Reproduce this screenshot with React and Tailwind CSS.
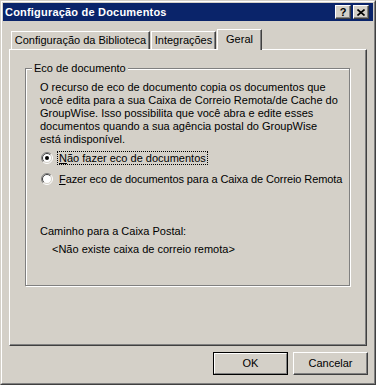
// App.jsx
import React from "react";

// Classic sunken radio button (12x12)
function Radio({ checked }) {
  return (
    <svg width="12" height="12" viewBox="0 0 12 12" className="shrink-0">
      <circle cx="6" cy="6" r="5" fill="#ffffff" />
      <path d="M2.1 9.9 A5.5 5.5 0 0 1 9.9 2.1" fill="none" stroke="#808080" strokeWidth="1" />
      <path d="M9.9 2.1 A5.5 5.5 0 0 1 2.1 9.9" fill="none" stroke="#ffffff" strokeWidth="1" />
      <path d="M2.8 9.2 A4.5 4.5 0 0 1 9.2 2.8" fill="none" stroke="#404040" strokeWidth="1" />
      <path d="M9.2 2.8 A4.5 4.5 0 0 1 2.8 9.2" fill="none" stroke="#d4d0c8" strokeWidth="1" />
      {checked && <circle cx="6" cy="6" r="2" fill="#000000" />}
    </svg>
  );
}

function TitleButton({ children }) {
  return (
    <div className="w-[16px] h-[14px] bg-[#d4d0c8] border border-t-white border-l-white border-r-[#404040] border-b-[#404040] shadow-[inset_-1px_-1px_0_#808080] flex items-center justify-center">
      {children}
    </div>
  );
}

export default function App() {
  return (
    <div className="w-[376px] h-[385px] bg-[#d4d0c8] border border-t-[#d4d0c8] border-l-[#d4d0c8] border-r-[#404040] border-b-[#404040] font-['Liberation_Sans',Arial,sans-serif] text-[11px] leading-[13px] text-black whitespace-nowrap">
      <div className="h-full border border-t-white border-l-white border-r-[#808080] border-b-[#808080] p-px flex flex-col">
        {/* Title bar */}
        <div className="h-[18px] bg-[#0a246a] flex items-center pl-[2px] pr-[4px]">
          <span className="flex-1 text-white font-bold text-[11px] tracking-[0.2px]">
            Configuração de Documentos
          </span>
          <div className="flex gap-[2px]">
            <TitleButton>
              <span className="font-bold text-[11px] leading-none text-black pt-px">?</span>
            </TitleButton>
            <TitleButton>
              <svg width="8" height="7" viewBox="0 0 8 7">
                <path d="M0.5 0.5 L7.5 6.5 M7.5 0.5 L0.5 6.5" stroke="#000" strokeWidth="1.6" />
              </svg>
            </TitleButton>
          </div>
        </div>

        {/* Body */}
        <div className="flex-1 flex flex-col px-[6px] pt-[8px]">
          {/* Tabs */}
          <div className="flex items-end gap-px pl-[2px]">
            <div className="w-[139px] h-[18px] border-t border-l border-r border-t-white border-l-white border-r-[#404040] shadow-[inset_-1px_0_0_#808080] flex items-center justify-center">
              Configuração da Biblioteca
            </div>
            <div className="w-[65px] h-[18px] border-t border-l border-r border-t-white border-l-white border-r-[#404040] shadow-[inset_-1px_0_0_#808080] flex items-center justify-center">
              Integrações
            </div>
            <div className="relative z-10 -mb-px w-[45px] h-[21px] bg-[#d4d0c8] border-t border-l border-r border-t-white border-l-white border-r-[#404040] shadow-[inset_-1px_0_0_#808080] flex items-start justify-center pt-[3px]">
              Geral
            </div>
          </div>

          {/* Tab panel */}
          <div className="h-[297px] border border-t-white border-l-white border-r-[#404040] border-b-[#404040] shadow-[inset_-1px_-1px_0_#808080] pl-[15px] pt-[18px]">
            <div className="relative w-[325px] h-[218px] border border-[#808080] shadow-[1px_1px_0_#ffffff,inset_1px_1px_0_#ffffff] pl-[14px] pt-[12px]">
              <span className="absolute -top-[7px] left-[6px] px-[2px] bg-[#d4d0c8]">
                Eco de documento
              </span>
              <p>
                O recurso de eco de documento copia os documentos que
                <br />
                você edita para a sua Caixa de Correio Remota/de Cache do
                <br />
                GroupWise. Isso possibilita que você abra e edite esses
                <br />
                documentos quando a sua agência postal do GroupWise
                <br />
                está indisponível.
              </p>

              <div className="mt-[5px] flex flex-col gap-[7px] pl-px">
                <div className="h-[14px] flex items-center gap-[4px]">
                  <Radio checked />
                  <span className="border border-dotted border-black px-px leading-[12px]">
                    <span className="underline">N</span>ão fazer eco de documentos
                  </span>
                </div>
                <div className="h-[14px] flex items-center gap-[4px]">
                  <Radio />
                  <span className="border border-transparent px-px leading-[12px] tracking-[-0.1px]">
                    <span className="underline">F</span>azer eco de documentos para a Caixa de Correio Remota
                  </span>
                </div>
              </div>

              <p className="mt-[39px]">Caminho para a Caixa Postal:</p>
              <p className="mt-[5px] pl-[12px]">&lt;Não existe caixa de correio remota&gt;</p>
            </div>
          </div>

          {/* Buttons */}
          <div className="flex justify-end gap-[5px] mt-[6px] -mr-px">
            <div className="w-[75px] h-[23px] border border-black">
              <div className="h-full border border-t-white border-l-white border-r-[#808080] border-b-[#808080] flex items-center justify-center">
                OK
              </div>
            </div>
            <div className="w-[75px] h-[23px] border border-t-white border-l-white border-r-[#404040] border-b-[#404040] shadow-[inset_-1px_-1px_0_#808080] flex items-center justify-center">
              Cancelar
            </div>
          </div>
        </div>
      </div>
    </div>
  );
}
